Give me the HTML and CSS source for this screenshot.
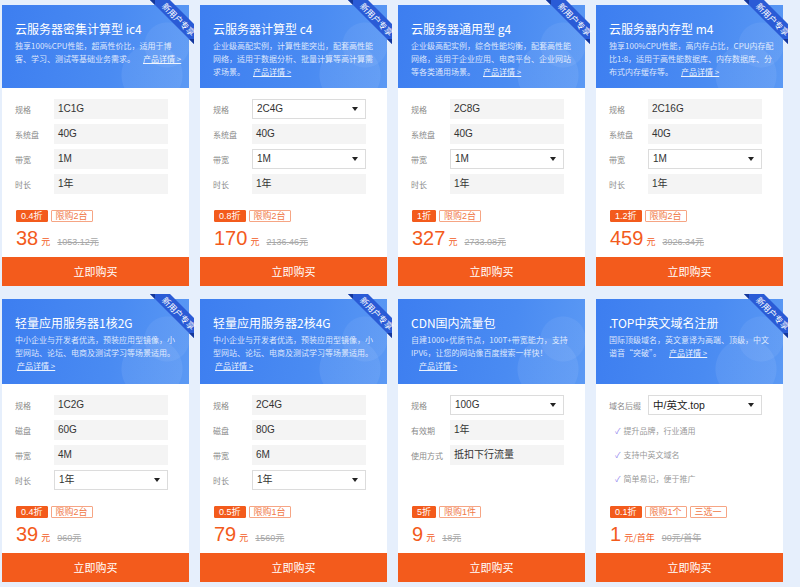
FILE: index.html
```html
<!DOCTYPE html>
<html lang="zh">
<head>
<meta charset="utf-8">
<title>云产品</title>
<link rel="stylesheet" href="styles.css">
</head>
<body>
<div class="grid">

  <div class="card">
    <div class="head">
      <div class="ribbon"><svg viewBox="0 0 50 50" width="50" height="50"><polygon class="band" points="6,0 26,0 50,24 50,44"/><polygon class="fold" points="6,0 11,5 11,0"/><polygon class="fold" points="50,44 45,39 50,39"/></svg><span>新用户专享</span></div>
      <div class="title">云服务器密集计算型 ic4</div>
      <div class="desc">独享100%CPU性能，超高性价比，适用于博客、学习、测试等基础业务需求。<span class="more">产品详情 &gt;</span></div>
    </div>
    <div class="body">
      <div class="specs">
        <div class="row"><span class="lbl">规格</span><div class="val">1C1G</div></div>
        <div class="row"><span class="lbl">系统盘</span><div class="val">40G</div></div>
        <div class="row"><span class="lbl">带宽</span><div class="val">1M</div></div>
        <div class="row"><span class="lbl">时长</span><div class="val">1年</div></div>
      </div>
      <div class="promo">
        <div class="tags"><span class="tag fill">0.4折</span><span class="tag">限购2台</span></div>
        <div class="price"><span class="num">38</span><span class="unit">元</span><s class="old">1053.12元</s></div>
      </div>
    </div>
    <div class="buy">立即购买</div>
  </div>

  <div class="card">
    <div class="head">
      <div class="ribbon"><svg viewBox="0 0 50 50" width="50" height="50"><polygon class="band" points="6,0 26,0 50,24 50,44"/><polygon class="fold" points="6,0 11,5 11,0"/><polygon class="fold" points="50,44 45,39 50,39"/></svg><span>新用户专享</span></div>
      <div class="title">云服务器计算型 c4</div>
      <div class="desc">企业级高配实例，计算性能突出，配套高性能网络，适用于数据分析、批量计算等高计算需求场景。<span class="more">产品详情 &gt;</span></div>
    </div>
    <div class="body">
      <div class="specs">
        <div class="row"><span class="lbl">规格</span><div class="val sel">2C4G</div></div>
        <div class="row"><span class="lbl">系统盘</span><div class="val">40G</div></div>
        <div class="row"><span class="lbl">带宽</span><div class="val sel">1M</div></div>
        <div class="row"><span class="lbl">时长</span><div class="val">1年</div></div>
      </div>
      <div class="promo">
        <div class="tags"><span class="tag fill">0.8折</span><span class="tag">限购2台</span></div>
        <div class="price"><span class="num">170</span><span class="unit">元</span><s class="old">2136.46元</s></div>
      </div>
    </div>
    <div class="buy">立即购买</div>
  </div>

  <div class="card">
    <div class="head">
      <div class="ribbon"><svg viewBox="0 0 50 50" width="50" height="50"><polygon class="band" points="6,0 26,0 50,24 50,44"/><polygon class="fold" points="6,0 11,5 11,0"/><polygon class="fold" points="50,44 45,39 50,39"/></svg><span>新用户专享</span></div>
      <div class="title">云服务器通用型 g4</div>
      <div class="desc">企业级高配实例，综合性能均衡，配套高性能网络，适用于企业应用、电商平台、企业网站等各类通用场景。<span class="more">产品详情 &gt;</span></div>
    </div>
    <div class="body">
      <div class="specs">
        <div class="row"><span class="lbl">规格</span><div class="val">2C8G</div></div>
        <div class="row"><span class="lbl">系统盘</span><div class="val">40G</div></div>
        <div class="row"><span class="lbl">带宽</span><div class="val sel">1M</div></div>
        <div class="row"><span class="lbl">时长</span><div class="val">1年</div></div>
      </div>
      <div class="promo">
        <div class="tags"><span class="tag fill">1折</span><span class="tag">限购2台</span></div>
        <div class="price"><span class="num">327</span><span class="unit">元</span><s class="old">2733.08元</s></div>
      </div>
    </div>
    <div class="buy">立即购买</div>
  </div>

  <div class="card">
    <div class="head">
      <div class="ribbon"><svg viewBox="0 0 50 50" width="50" height="50"><polygon class="band" points="6,0 26,0 50,24 50,44"/><polygon class="fold" points="6,0 11,5 11,0"/><polygon class="fold" points="50,44 45,39 50,39"/></svg><span>新用户专享</span></div>
      <div class="title">云服务器内存型 m4</div>
      <div class="desc">独享100%CPU性能，高内存占比，CPU内存配比1:8，适用于高性能数据库、内存数据库、分布式内存缓存等。<span class="more">产品详情 &gt;</span></div>
    </div>
    <div class="body">
      <div class="specs">
        <div class="row"><span class="lbl">规格</span><div class="val">2C16G</div></div>
        <div class="row"><span class="lbl">系统盘</span><div class="val">40G</div></div>
        <div class="row"><span class="lbl">带宽</span><div class="val sel">1M</div></div>
        <div class="row"><span class="lbl">时长</span><div class="val">1年</div></div>
      </div>
      <div class="promo">
        <div class="tags"><span class="tag fill">1.2折</span><span class="tag">限购2台</span></div>
        <div class="price"><span class="num">459</span><span class="unit">元</span><s class="old">3926.34元</s></div>
      </div>
    </div>
    <div class="buy">立即购买</div>
  </div>

  <div class="card tall">
    <div class="head">
      <div class="ribbon"><svg viewBox="0 0 50 50" width="50" height="50"><polygon class="band" points="6,0 26,0 50,24 50,44"/><polygon class="fold" points="6,0 11,5 11,0"/><polygon class="fold" points="50,44 45,39 50,39"/></svg><span>新用户专享</span></div>
      <div class="title">轻量应用服务器1核2G</div>
      <div class="desc">中小企业与开发者优选，预装应用型镜像，小型网站、论坛、电商及测试学习等场景适用。<br><span class="more first">产品详情 &gt;</span></div>
    </div>
    <div class="body">
      <div class="specs">
        <div class="row"><span class="lbl">规格</span><div class="val">1C2G</div></div>
        <div class="row"><span class="lbl">磁盘</span><div class="val">60G</div></div>
        <div class="row"><span class="lbl">带宽</span><div class="val">4M</div></div>
        <div class="row"><span class="lbl">时长</span><div class="val sel">1年</div></div>
      </div>
      <div class="promo">
        <div class="tags"><span class="tag fill">0.4折</span><span class="tag">限购2台</span></div>
        <div class="price"><span class="num">39</span><span class="unit">元</span><s class="old">960元</s></div>
      </div>
    </div>
    <div class="buy">立即购买</div>
  </div>

  <div class="card tall">
    <div class="head">
      <div class="ribbon"><svg viewBox="0 0 50 50" width="50" height="50"><polygon class="band" points="6,0 26,0 50,24 50,44"/><polygon class="fold" points="6,0 11,5 11,0"/><polygon class="fold" points="50,44 45,39 50,39"/></svg><span>新用户专享</span></div>
      <div class="title">轻量应用服务器2核4G</div>
      <div class="desc">中小企业与开发者优选，预装应用型镜像，小型网站、论坛、电商及测试学习等场景适用。<br><span class="more first">产品详情 &gt;</span></div>
    </div>
    <div class="body">
      <div class="specs">
        <div class="row"><span class="lbl">规格</span><div class="val">2C4G</div></div>
        <div class="row"><span class="lbl">磁盘</span><div class="val">80G</div></div>
        <div class="row"><span class="lbl">带宽</span><div class="val">6M</div></div>
        <div class="row"><span class="lbl">时长</span><div class="val sel">1年</div></div>
      </div>
      <div class="promo">
        <div class="tags"><span class="tag fill">0.5折</span><span class="tag">限购1台</span></div>
        <div class="price"><span class="num">79</span><span class="unit">元</span><s class="old">1560元</s></div>
      </div>
    </div>
    <div class="buy">立即购买</div>
  </div>

  <div class="card tall">
    <div class="head">
      <div class="title">CDN国内流量包</div>
      <div class="desc">自建1000+优质节点，100T+带宽能力，支持IPV6，让您的网站像百度搜索一样快！<span class="more">产品详情 &gt;</span></div>
    </div>
    <div class="body">
      <div class="specs">
        <div class="row"><span class="lbl">规格</span><div class="val sel">100G</div></div>
        <div class="row"><span class="lbl">有效期</span><div class="val">1年</div></div>
        <div class="row"><span class="lbl">使用方式</span><div class="val">抵扣下行流量</div></div>
      </div>
      <div class="promo">
        <div class="tags"><span class="tag fill">5折</span><span class="tag">限购1件</span></div>
        <div class="price"><span class="num">9</span><span class="unit">元</span><s class="old">18元</s></div>
      </div>
    </div>
    <div class="buy">立即购买</div>
  </div>

  <div class="card tall">
    <div class="head">
      <div class="ribbon"><svg viewBox="0 0 50 50" width="50" height="50"><polygon class="band" points="6,0 26,0 50,24 50,44"/><polygon class="fold" points="6,0 11,5 11,0"/><polygon class="fold" points="50,44 45,39 50,39"/></svg><span>新用户专享</span></div>
      <div class="title">.TOP中英文域名注册</div>
      <div class="desc">国际顶级域名，英文意译为高端、顶级，中文谐音“突破”。<span class="more">产品详情 &gt;</span></div>
    </div>
    <div class="body">
      <div class="specs">
        <div class="row"><span class="lbl">域名后缀</span><div class="val sel dark">中/英文.top</div></div>
        <ul class="checks">
          <li>提升品牌，行业通用</li>
          <li>支持中英文域名</li>
          <li>简单易记，便于推广</li>
        </ul>
      </div>
      <div class="promo">
        <div class="tags"><span class="tag fill">0.1折</span><span class="tag">限购1个</span><span class="tag">三选一</span></div>
        <div class="price"><span class="num">1</span><span class="unit">元/首年</span><s class="old">90元/首年</s></div>
      </div>
    </div>
    <div class="buy">立即购买</div>
  </div>

</div>
</body>
</html>
```

FILE: styles.css
```css
* { box-sizing: border-box; }
html, body { margin: 0; padding: 0; }
body {
  background: #e6effc;
  font-family: "Liberation Sans", "Noto Sans CJK SC", sans-serif;
  width: 800px;
  height: 587px;
  overflow: hidden;
}
.grid {
  display: grid;
  grid-template-columns: repeat(4, 187px);
  grid-template-rows: 281px 283px;
  column-gap: 11px;
  row-gap: 13px;
  padding: 5px 0 0 2px;
}
.card {
  background: #fff;
  display: flex;
  flex-direction: column;
  position: relative;
}
.head {
  position: relative;
  height: 83px;
  padding: 16px 7px 0 13px;
  color: #fff;
  background:
    radial-gradient(circle at 150px 70px, rgba(255,255,255,0.07) 0 30px, rgba(255,255,255,0) 31px),
    radial-gradient(circle at 165px 40px, rgba(255,255,255,0.06) 0 22px, rgba(255,255,255,0) 23px),
    linear-gradient(100deg, #3d7ef0 0%, #4a8bf2 60%, #5b99f4 100%);
}
.tall .head { height: 85px; }
.title {
  font-size: 12px;
  line-height: 16px;
  font-family: "Noto Sans CJK SC", sans-serif;
  white-space: nowrap;
}
.desc {
  margin-top: 2px;
  font-size: 8px;
  line-height: 13px;
  color: rgba(255,255,255,0.82);
  font-family: "Noto Sans CJK SC", sans-serif;
}
.more {
  display: inline-block;
  line-height: 13px;
  vertical-align: top;
  white-space: nowrap;
  margin-left: 8px;
  text-decoration: underline;
  color: rgba(255,255,255,0.9);
}
.more.first { margin-left: 2px; }
.ribbon {
  position: absolute;
  top: -5px;
  right: -5px;
  width: 50px;
  height: 50px;
  z-index: 2;
}
.ribbon svg { display: block; }
.ribbon .band { fill: #2a5bd6; }
.ribbon .fold { fill: #15379a; }
.ribbon span {
  position: absolute;
  left: 5px;
  top: 12px;
  width: 60px;
  height: 14px;
  line-height: 14px;
  text-align: center;
  font-size: 8.5px;
  color: #fff;
  font-family: "Noto Sans CJK SC", sans-serif;
  transform: rotate(45deg);
}
.body {
  flex: 1;
  display: flex;
  flex-direction: column;
  justify-content: space-between;
  padding: 11px 21px 0 13px;
}
.specs {
  display: flex;
  flex-direction: column;
  gap: 5px;
}
.row {
  display: flex;
  align-items: center;
  height: 20px;
}
.lbl {
  width: 39px;
  flex: none;
  font-size: 8px;
  color: #8a8a8a;
  font-family: "Noto Sans CJK SC", sans-serif;
}
.val {
  width: 114px;
  height: 20px;
  line-height: 20px;
  padding-left: 4px;
  background: #f4f4f4;
  font-size: 10px;
  color: #333;
  font-family: "Liberation Sans", "Noto Sans CJK SC", sans-serif;
  position: relative;
}
.val.sel {
  background: #fff;
  border: 1px solid #dcdcdc;
  line-height: 18px;
}
.val.sel::after {
  content: "";
  position: absolute;
  right: 7px;
  top: 7px;
  border-left: 3.5px solid transparent;
  border-right: 3.5px solid transparent;
  border-top: 4px solid #222;
}
.val.dark { color: #222; font-size: 10.5px; }
.checks {
  list-style: none;
  margin: 1px 0 0 0;
  padding: 0 0 0 6px;
  display: flex;
  flex-direction: column;
  gap: 4px;
}
.checks li {
  height: 20px;
  line-height: 20px;
  font-size: 8px;
  color: #9a9a9a;
  font-family: "Noto Sans CJK SC", sans-serif;
}
.checks li::before {
  content: "✓";
  color: #8f84ee;
  margin-right: 3px;
  font-size: 8px;
}
.promo {
  padding: 0 0 8px 1px;
}
.tags {
  display: flex;
  gap: 3px;
  margin-bottom: 5px;
}
.tag {
  height: 12px;
  line-height: 10px;
  padding: 0 4px;
  font-size: 9px;
  border: 1px solid #f6a584;
  color: #f07846;
  font-family: "Liberation Sans", "Noto Sans CJK SC", sans-serif;
  border-radius: 1px;
}
.tag.fill {
  background: #f35b1c;
  border-color: #f35b1c;
  color: #fff;
}
.price {
  height: 22px;
  display: flex;
  align-items: baseline;
  white-space: nowrap;
}
.num {
  font-size: 20px;
  line-height: 22px;
  color: #f35b1c;
}
.unit {
  font-size: 9px;
  color: #f35b1c;
  margin-left: 3px;
  font-family: "Noto Sans CJK SC", sans-serif;
}
.old {
  font-size: 9px;
  color: #a8a8a8;
  margin-left: 7px;
}
.buy {
  height: 29px;
  line-height: 29px;
  flex: none;
  background: #f35b1c;
  color: #fff;
  text-align: center;
  font-size: 11px;
  font-family: "Noto Sans CJK SC", sans-serif;
}
```
